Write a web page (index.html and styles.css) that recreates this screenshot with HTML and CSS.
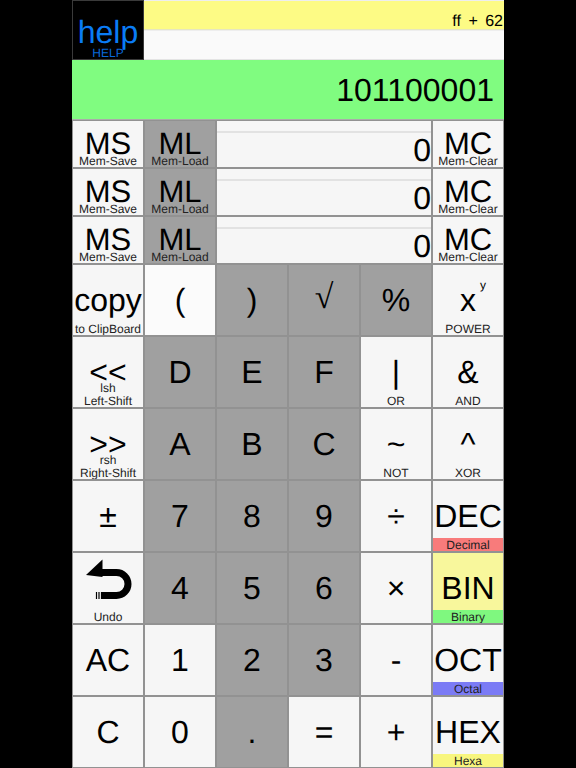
FILE: index.html
```html
<!DOCTYPE html>
<html lang="en">
<head>
  <meta charset="UTF-8">
  <title>Programmer Calculator</title>
  <link rel="stylesheet" href="styles.css">
</head>
<body>
  <div class="calc">

    <div class="top">
      <div class="help">
        <span class="help-big">help</span>
        <span class="help-small">HELP</span>
      </div>
      <div class="lines">
        <div class="expr">ff + 62</div>
        <div class="blank"></div>
      </div>
    </div>

    <div class="display">101100001</div>

    <div class="mem-row">
      <div class="key"><span class="big mem">MS</span><span class="sub">Mem-Save</span></div>
      <div class="key gray"><span class="big mem">ML</span><span class="sub">Mem-Load</span></div>
      <div class="mem-value"><div class="mem-strip"></div><div class="mem-num">0</div></div>
      <div class="key"><span class="big mem">MC</span><span class="sub">Mem-Clear</span></div>
    </div>
    <div class="mem-row">
      <div class="key"><span class="big mem">MS</span><span class="sub">Mem-Save</span></div>
      <div class="key gray"><span class="big mem">ML</span><span class="sub">Mem-Load</span></div>
      <div class="mem-value"><div class="mem-strip"></div><div class="mem-num">0</div></div>
      <div class="key"><span class="big mem">MC</span><span class="sub">Mem-Clear</span></div>
    </div>
    <div class="mem-row">
      <div class="key"><span class="big mem">MS</span><span class="sub">Mem-Save</span></div>
      <div class="key gray"><span class="big mem">ML</span><span class="sub">Mem-Load</span></div>
      <div class="mem-value"><div class="mem-strip"></div><div class="mem-num">0</div></div>
      <div class="key"><span class="big mem">MC</span><span class="sub">Mem-Clear</span></div>
    </div>

    <div class="keys">
      <div class="key"><span class="big">copy</span><span class="sub">to ClipBoard</span></div>
      <div class="key white"><span class="big">(</span></div>
      <div class="key gray"><span class="big">)</span></div>
      <div class="key gray"><span class="big root">√</span></div>
      <div class="key gray"><span class="big">%</span></div>
      <div class="key"><span class="big"><span class="pow">x<span class="pow-y">y</span></span></span><span class="sub">POWER</span></div>

      <div class="key"><span class="big shift">&lt;&lt;</span><span class="sub">lsh<br>Left-Shift</span></div>
      <div class="key gray"><span class="big">D</span></div>
      <div class="key gray"><span class="big">E</span></div>
      <div class="key gray"><span class="big">F</span></div>
      <div class="key"><span class="big">|</span><span class="sub">OR</span></div>
      <div class="key"><span class="big">&amp;</span><span class="sub">AND</span></div>

      <div class="key"><span class="big shift">&gt;&gt;</span><span class="sub">rsh<br>Right-Shift</span></div>
      <div class="key gray"><span class="big">A</span></div>
      <div class="key gray"><span class="big">B</span></div>
      <div class="key gray"><span class="big">C</span></div>
      <div class="key"><span class="big">~</span><span class="sub">NOT</span></div>
      <div class="key"><span class="big">^</span><span class="sub">XOR</span></div>

      <div class="key"><span class="big">±</span></div>
      <div class="key gray"><span class="big">7</span></div>
      <div class="key gray"><span class="big">8</span></div>
      <div class="key gray"><span class="big">9</span></div>
      <div class="key"><span class="big">÷</span></div>
      <div class="key"><span class="big">DEC</span><span class="tag red">Decimal</span></div>

      <div class="key">
        <svg class="undo" viewBox="80 555 56 50" width="56" height="50">
          <path d="M86 575 L102.5 559.5 V577 Z" fill="#000"/>
          <path d="M102 572.5 H116.5 A11.5 11.5 0 0 1 116.5 595.5 H102" fill="none" stroke="#000" stroke-width="7"/>
          <path d="M96.5 592 V599 M99 592 V599 M101.5 592 V599" fill="none" stroke="#000" stroke-width="1.2"/>
        </svg>
        <span class="sub">Undo</span>
      </div>
      <div class="key gray"><span class="big">4</span></div>
      <div class="key gray"><span class="big">5</span></div>
      <div class="key gray"><span class="big">6</span></div>
      <div class="key"><span class="big">×</span></div>
      <div class="key pale"><span class="big">BIN</span><span class="tag green">Binary</span></div>

      <div class="key"><span class="big">AC</span></div>
      <div class="key"><span class="big">1</span></div>
      <div class="key gray"><span class="big">2</span></div>
      <div class="key gray"><span class="big">3</span></div>
      <div class="key"><span class="big">-</span></div>
      <div class="key"><span class="big">OCT</span><span class="tag blue">Octal</span></div>

      <div class="key"><span class="big">C</span></div>
      <div class="key"><span class="big">0</span></div>
      <div class="key gray"><span class="big">.</span></div>
      <div class="key"><span class="big">=</span></div>
      <div class="key"><span class="big">+</span></div>
      <div class="key"><span class="big">HEX</span><span class="tag yellow">Hexa</span></div>
    </div>

  </div>
</body>
</html>
```

FILE: styles.css
```css
* {
  box-sizing: border-box;
}

body {
  margin: 0;
  background: #000;
  font-family: "Liberation Sans", Arial, sans-serif;
  color: #000;
  text-rendering: geometricPrecision;
}

.calc {
  width: 432px;
  height: 768px;
  margin: 0 auto;
  background: #f6f6f6;
}

/* top area */
.top {
  display: flex;
  height: 60px;
}

.help {
  width: 72px;
  display: flex;
  flex-direction: column;
  align-items: center;
  background: #000;
  border: 1px solid #3a3a3a;
  color: #0a7cf5;
}

.help-big {
  font-size: 32px;
  line-height: 32px;
  margin-top: 15px;
}

.help-small {
  font-size: 12px;
  line-height: 11px;
  color: #0a68d8;
}

.lines {
  flex: 1;
  display: flex;
  flex-direction: column;
}

.expr {
  height: 30px;
  padding: 13px 1px 0 0;
  background: #fdfb85;
  border-top: 1px solid #eee;
  border-bottom: 1px solid #e6e6c0;
  font-size: 16px;
  line-height: 16px;
  word-spacing: 3px;
  text-align: right;
}

.blank {
  height: 30px;
  background: #fafafa;
  border-top: 1px solid #eee;
  border-bottom: 1px solid #e4e4e4;
}

.display {
  height: 60px;
  padding: 0 10px 0 0;
  background: #80fc80;
  border-bottom: 1px solid #aaa;
  font-size: 32px;
  line-height: 60px;
  text-align: right;
}

/* memory rows */
.mem-row {
  display: grid;
  grid-template-columns: 72px 72px 216px 72px;
  height: 48px;
}

.mem-value {
  border: 1px solid #929292;
  background: #f6f6f6;
}

.mem-strip {
  height: 12px;
  border-bottom: 2px solid #e2e2e2;
}

.mem-num {
  font-size: 32px;
  line-height: 34px;
  text-align: right;
}

/* keypad */
.keys {
  display: grid;
  grid-template-columns: repeat(6, 72px);
  grid-auto-rows: 72px;
}

.key {
  position: relative;
  display: flex;
  align-items: center;
  justify-content: center;
  border: 1px solid #929292;
  background: #f6f6f6;
  overflow: hidden;
}

.key.gray {
  background: #a0a0a0;
}

.key.white {
  background: #fbfbfb;
}

.key.pale {
  background: #f8f79c;
}

.big {
  font-size: 32px;
  line-height: 32px;
}

.big.mem {
  font-size: 31px;
  line-height: 26px;
}

.big.shift {
  line-height: 20px;
}

.big.root {
  font-family: "Liberation Serif", serif;
  font-size: 34px;
  margin-top: -4px;
}

/* small captions sit at the bottom edge of a key */
.sub {
  position: absolute;
  left: 0;
  right: 0;
  bottom: -1px;
  font-size: 12px;
  line-height: 13px;
  color: #222;
  text-align: center;
  white-space: nowrap;
}

.tag {
  position: absolute;
  left: 0;
  right: 0;
  bottom: 0;
  height: 13px;
  font-size: 12px;
  line-height: 14px;
  color: #222;
  text-align: center;
}

.tag.red { background: #f87b7b; }
.tag.green { background: #7ff87f; }
.tag.blue { background: #7b7bf5; }
.tag.yellow { background: #f8f67e; }

.pow {
  position: relative;
}

.pow-y {
  position: absolute;
  top: -13px;
  left: 20px;
  font-size: 12px;
}

.undo {
  display: block;
  margin-top: -16px;
}
```
